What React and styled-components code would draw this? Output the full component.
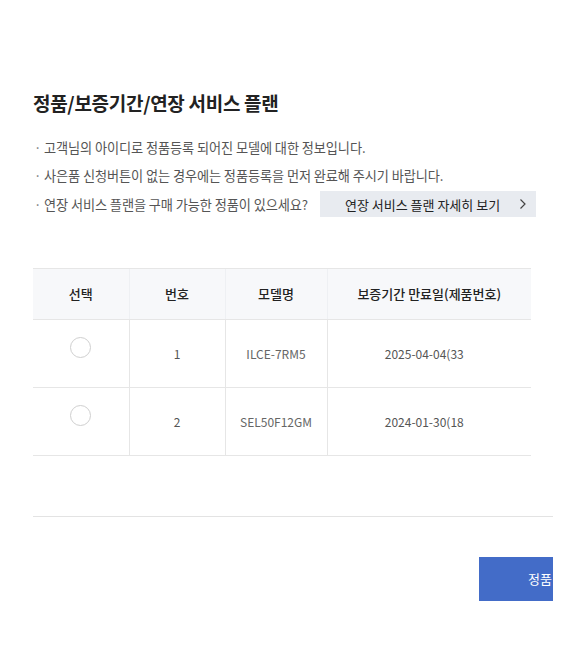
import React, { useState } from "react";
import styled, { createGlobalStyle } from "styled-components";

const GlobalStyle = createGlobalStyle`
  body {
    margin: 0;
    background: #fff;
    font-family: "Noto Sans CJK KR", "Noto Sans", sans-serif;
    color: #222;
  }
`;

const Wrapper = styled.main`
  width: 520px;
  padding: 89px 0 50px 33px;
`;

const Title = styled.h2`
  margin: 0;
  font-size: 19px;
  line-height: 28px;
  font-weight: 700;
  color: #222;
  letter-spacing: -0.3px;
`;

const InfoList = styled.ul`
  list-style: none;
  margin: 16px 0 0;
  padding: 0;
`;

const InfoItem = styled.li`
  display: flex;
  align-items: center;
  min-height: 28.5px;
  font-size: 13.2px;
  color: #555;
  letter-spacing: -0.1px;
  white-space: nowrap;

  &::before {
    content: "·";
    width: 10px;
    margin-left: 1px;
    color: #777;
  }
`;

const PlanBtn = styled.button`
  display: flex;
  align-items: center;
  justify-content: space-between;
  flex-shrink: 0;
  width: 216px;
  height: 26px;
  margin-left: 12px;
  padding: 0 9px 0 25px;
  border: none;
  background: #e8ebf0;
  font-family: inherit;
  font-size: 13px;
  color: #222;
  cursor: pointer;
`;

const Table = styled.table`
  width: 498px;
  margin-top: 49px;
  border-collapse: collapse;
  table-layout: fixed;
`;

const Th = styled.th`
  height: 50px;
  padding: 0;
  background: #f7f8fa;
  border-top: 1px solid #e6e6e6;
  border-bottom: 1px solid #e6e6e6;
  border-left: 1px solid #eef0f3;
  font-size: 13px;
  font-weight: 500;
  color: #222;
  &:first-child { border-left: none; }
`;

const Td = styled.td`
  height: 67px;
  padding: 0;
  text-align: center;
  border-bottom: 1px solid #e6e6e6;
  border-left: 1px solid #e6e6e6;
  font-size: 12px;
  color: ${(p) => (p.$light ? "#666" : "#555")};
  &:first-child { border-left: none; }
`;

const Radio = styled.span`
  display: block;
  width: 19px;
  height: 19px;
  margin: -12px auto 0;
  border: 1px solid ${(p) => (p.$on ? "#436cc8" : "#cfcfcf")};
  border-radius: 50%;
  cursor: pointer;
`;

const Divider = styled.hr`
  margin: 60px 0 0;
  border: none;
  border-top: 1px solid #e3e3e3;
`;

const Footer = styled.div`
  display: flex;
  justify-content: flex-end;
  margin-top: 40px;
`;

const SubmitBtn = styled.button`
  display: flex;
  align-items: center;
  justify-content: flex-end;
  width: 74px;
  height: 44px;
  padding: 0 1px 0 0;
  border: none;
  background: #436cc8;
  color: #fff;
  font-family: inherit;
  font-size: 13px;
  white-space: nowrap;
`;

const rows = [
  { no: 1, model: "ILCE-7RM5", date: "2025-04-04(33" },
  { no: 2, model: "SEL50F12GM", date: "2024-01-30(18" },
];

export default function App() {
  const [picked, setPicked] = useState(null);

  return (
    <>
      <GlobalStyle />
      <Wrapper>
        <Title>정품/보증기간/연장 서비스 플랜</Title>
        <InfoList>
          <InfoItem>고객님의 아이디로 정품등록 되어진 모델에 대한 정보입니다.</InfoItem>
          <InfoItem>사은품 신청버튼이 없는 경우에는 정품등록을 먼저 완료해 주시기 바랍니다.</InfoItem>
          <InfoItem>
            연장 서비스 플랜을 구매 가능한 정품이 있으세요?
            <PlanBtn>
              연장 서비스 플랜 자세히 보기
              <svg width="8" height="12" viewBox="0 0 8 12" fill="none">
                <path d="M1.5 1.5 6 6l-4.5 4.5" stroke="#444" strokeWidth="1.2" />
              </svg>
            </PlanBtn>
          </InfoItem>
        </InfoList>

        <Table>
          <colgroup>
            <col style={{ width: 96 }} />
            <col style={{ width: 96 }} />
            <col style={{ width: 102 }} />
            <col />
          </colgroup>
          <thead>
            <tr>
              <Th>선택</Th>
              <Th>번호</Th>
              <Th>모델명</Th>
              <Th>보증기간 만료일(제품번호)</Th>
            </tr>
          </thead>
          <tbody>
            {rows.map((r) => (
              <tr key={r.no}>
                <Td>
                  <Radio $on={picked === r.no} onClick={() => setPicked(r.no)} />
                </Td>
                <Td>{r.no}</Td>
                <Td $light>{r.model}</Td>
                <Td style={{ paddingRight: 10 }}>{r.date}</Td>
              </tr>
            ))}
          </tbody>
        </Table>

        <Divider />
        <Footer>
          <SubmitBtn>정품</SubmitBtn>
        </Footer>
      </Wrapper>
    </>
  );
}
